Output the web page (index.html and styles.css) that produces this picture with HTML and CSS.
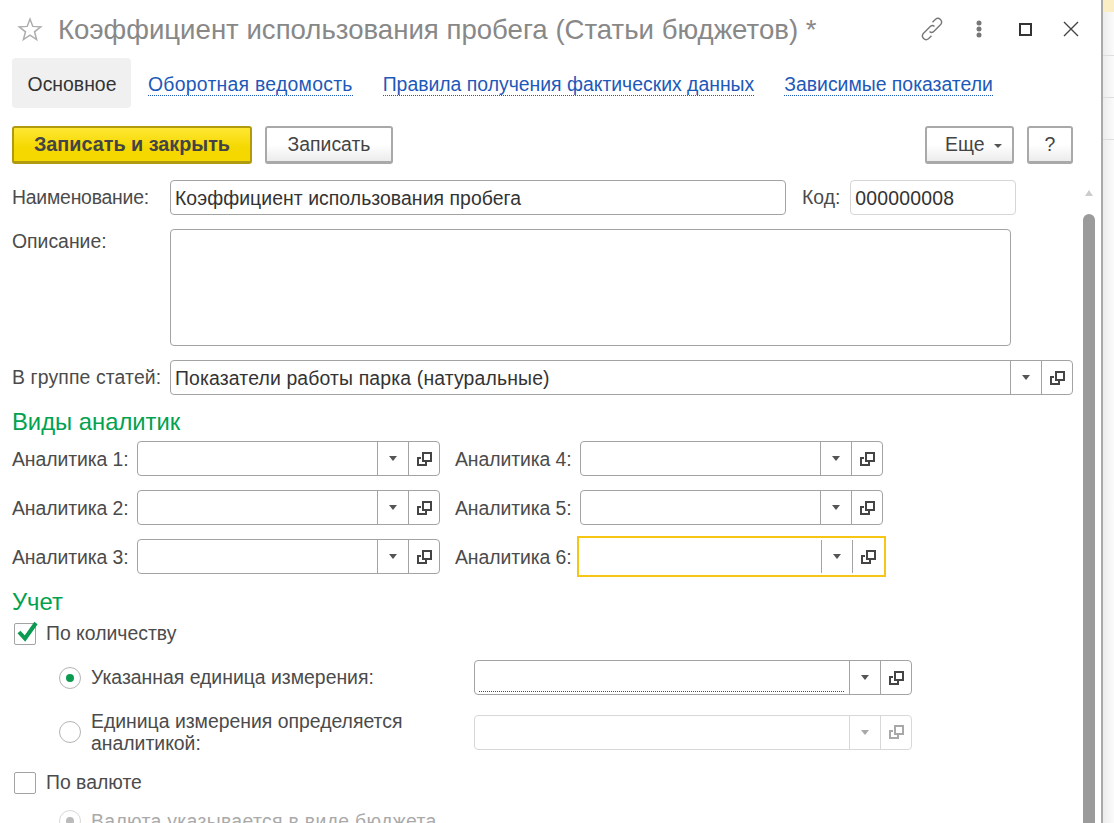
FILE: index.html
```html
<!DOCTYPE html>
<html lang="ru">
<head>
    <meta charset="UTF-8">
    <title>Коэффициент использования пробега</title>
    <link rel="stylesheet" href="styles.css">
</head>
<body>
    <svg class="defs" width="0" height="0">
        <symbol id="open" viewBox="0 0 15 14">
            <path d="M6 1h8v8h-8z M4 6H1v7h8v-3" fill="none" stroke="currentColor" stroke-width="2"/>
        </symbol>
    </svg>
    <div class="window">
        <div class="title-bar">
            <svg class="star" width="26" height="26" viewBox="0 0 26 26">
                <path d="M13 3l2.800 7.400 7.900.4-6.200 5 2.100 7.700-6.600-4.400-6.600 4.400 2.100-7.700-6.200-5 7.900-.4z" fill="none" stroke="#adadad" stroke-width="1.500"/>
            </svg>
            <div class="title">Коэффициент использования пробега (Статьи бюджетов) *</div>
            <div class="title-icons">
                <svg class="icon-link" width="24" height="24" viewBox="0 0 24 24">
                    <path d="M9.500 14.500a3 3 0 0 0 4.200 0l7-7a3.700 3.700 0 0 0-5.200-5.200l-3 3M14.500 9.500a3 3 0 0 0-4.200 0l-7 7a3.700 3.700 0 0 0 5.200 5.200l3-3" fill="none" stroke="#777" stroke-width="1.400"/>
                </svg>
                <svg class="icon-dots" width="6" height="18" viewBox="0 0 6 18">
                    <circle cx="3" cy="3" r="2.500" fill="#777"/><circle cx="3" cy="9" r="2.500" fill="#777"/><circle cx="3" cy="15" r="2.500" fill="#777"/>
                </svg>
                <div class="maximize"></div>
                <svg class="icon-close" width="16" height="16" viewBox="0 0 16 16">
                    <path d="M1 1l14 14M15 1L1 15" stroke="#444" stroke-width="1.400"/>
                </svg>
            </div>
        </div>

        <div class="tabs">
            <div class="tab-active">Основное</div>
            <a class="tab-link tab-link-first">Оборотная ведомость</a>
            <a class="tab-link">Правила получения фактических данных</a>
            <a class="tab-link">Зависимые показатели</a>
        </div>

        <div class="toolbar">
            <button class="btn btn-primary">Записать и закрыть</button>
            <button class="btn btn-save">Записать</button>
            <div class="spacer"></div>
            <button class="btn btn-more">Еще <span class="caret"></span></button>
            <button class="btn btn-help">?</button>
        </div>

        <div class="form">
            <div class="row row-name">
                <label class="label label-name label-tight">Наименование:</label>
                <div class="field field-name">Коэффициент использования пробега</div>
                <label class="label label-code">Код:</label>
                <div class="field field-code">000000008</div>
            </div>
            <div class="row row-desc">
                <label class="label label-name">Описание:</label>
                <div class="field field-desc"></div>
            </div>
            <div class="row row-group">
                <label class="label label-group">В группе статей:</label>
                <div class="combo combo-group">
                    <div class="combo-value">Показатели работы парка (натуральные)</div>
                    <div class="combo-btn"><span class="arrow"></span></div>
                    <div class="combo-btn"><svg width="15" height="14"><use href="#open"/></svg></div>
                </div>
            </div>

            <h2 class="section-title title-analytics">Виды аналитик</h2>
            <div class="analytics">
                <div class="row-a">
                    <label class="label label-a">Аналитика 1:</label>
                    <div class="combo combo-a">
                        <div class="combo-value"></div>
                        <div class="combo-btn"><span class="arrow"></span></div>
                        <div class="combo-btn"><svg width="15" height="14"><use href="#open"/></svg></div>
                    </div>
                </div>
                <div class="row-a">
                    <label class="label label-a">Аналитика 4:</label>
                    <div class="combo combo-a">
                        <div class="combo-value"></div>
                        <div class="combo-btn"><span class="arrow"></span></div>
                        <div class="combo-btn"><svg width="15" height="14"><use href="#open"/></svg></div>
                    </div>
                </div>
                <div class="row-a">
                    <label class="label label-a">Аналитика 2:</label>
                    <div class="combo combo-a">
                        <div class="combo-value"></div>
                        <div class="combo-btn"><span class="arrow"></span></div>
                        <div class="combo-btn"><svg width="15" height="14"><use href="#open"/></svg></div>
                    </div>
                </div>
                <div class="row-a">
                    <label class="label label-a">Аналитика 5:</label>
                    <div class="combo combo-a">
                        <div class="combo-value"></div>
                        <div class="combo-btn"><span class="arrow"></span></div>
                        <div class="combo-btn"><svg width="15" height="14"><use href="#open"/></svg></div>
                    </div>
                </div>
                <div class="row-a">
                    <label class="label label-a">Аналитика 3:</label>
                    <div class="combo combo-a">
                        <div class="combo-value"></div>
                        <div class="combo-btn"><span class="arrow"></span></div>
                        <div class="combo-btn"><svg width="15" height="14"><use href="#open"/></svg></div>
                    </div>
                </div>
                <div class="row-a">
                    <label class="label label-a">Аналитика 6:</label>
                    <div class="combo combo-a combo-focus">
                        <div class="combo-value"></div>
                        <div class="combo-btn"><span class="arrow"></span></div>
                        <div class="combo-btn"><svg width="15" height="14"><use href="#open"/></svg></div>
                    </div>
                </div>
            </div>

            <h2 class="section-title title-account">Учет</h2>
            <div class="check-row check-qty">
                <span class="checkbox">
                    <svg class="check-mark" width="24" height="24" viewBox="0 0 24 24">
                        <path d="M5 13l6 6.500L22 4" fill="none" stroke="#0a9a50" stroke-width="4"/>
                    </svg>
                </span>
                <span class="label">По количеству</span>
            </div>
            <div class="radio-row radio-unit">
                <span class="radio radio-on"></span>
                <span class="label radio-label radio-label-single">Указанная единица измерения:</span>
                <div class="combo combo-unit">
                    <div class="combo-value"><div class="required"></div></div>
                    <div class="combo-btn"><span class="arrow"></span></div>
                    <div class="combo-btn"><svg width="15" height="14"><use href="#open"/></svg></div>
                </div>
            </div>
            <div class="radio-row radio-by-analytics">
                <span class="radio"></span>
                <span class="label radio-label">Единица измерения определяется аналитикой:</span>
                <div class="combo combo-unit combo-disabled">
                    <div class="combo-value"></div>
                    <div class="combo-btn"><span class="arrow"></span></div>
                    <div class="combo-btn"><svg width="15" height="14"><use href="#open"/></svg></div>
                </div>
            </div>
            <div class="check-row check-currency">
                <span class="checkbox"></span>
                <span class="label">По валюте</span>
            </div>
            <div class="radio-row radio-currency">
                <span class="radio radio-off-dot"></span>
                <span class="label radio-label label-muted">Валюта указывается в виде бюджета</span>
            </div>
        </div>

        <div class="scrollbar">
            <span class="scroll-up"></span>
            <span class="scroll-thumb"></span>
        </div>
    </div>
    <div class="backdrop">
        <div class="backdrop-cell backdrop-first"></div>
        <div class="backdrop-cell backdrop-second"></div>
        <div class="backdrop-cell"></div>
        <div class="backdrop-cell"></div>
    </div>
</body>
</html>
```

FILE: styles.css
```css
html, body {
    margin: 0;
    height: 100%;
    overflow: hidden;
}

body {
    display: flex;
    background: #fff;
    font-family: "Liberation Sans", Arial, sans-serif;
    font-size: 19.4px;
    color: #4b4b4b;
}

.defs {
    position: absolute;
}

.window {
    position: relative;
    width: 1103px;
    height: 823px;
    flex: none;
    overflow: hidden;
    background: #fff;
    border-right: 2px solid #a9a9a9;
    padding: 0 12px;
    box-sizing: border-box;
}

.backdrop {
    flex: 1;
    background: linear-gradient(90deg, #ececec, #fbfbfb);
}

.backdrop-cell {
    height: 41px;
    border-bottom: 1px solid #dedede;
}

.backdrop-first {
    height: 12px;
    background: #fbeec4;
    border-bottom: none;
}

.backdrop-second {
    height: 43px;
}

/* title */
.title-bar {
    display: flex;
    align-items: center;
    height: 58px;
}

.star {
    margin-left: 5px;
    flex: none;
}

.title {
    margin-left: 15px;
    padding-top: 2px;
    font-size: 27.6px;
    color: #888;
    white-space: nowrap;
}

.title-icons {
    display: flex;
    align-items: center;
    margin-left: auto;
    margin-right: 10px;
}

.icon-dots {
    margin-left: 32px;
}

.maximize {
    width: 9px;
    height: 9px;
    border: 2px solid #333;
    margin-left: 37px;
}

.icon-close {
    margin-left: 31px;
}

/* tabs */
.tabs {
    display: flex;
    align-items: center;
    height: 50px;
}

.tab-active {
    box-sizing: border-box;
    width: 119px;
    height: 50px;
    padding-left: 1px;
    line-height: 52px;
    text-align: center;
    background: #f0f0f0;
    border-radius: 4px;
    color: #333;
    margin-right: 17px;
}

.tab-link {
    color: #1d59b8;
    border-bottom: 1px dotted #1d59b8;
    line-height: 21px;
    margin-top: 4px;
    margin-right: 30px;
}

.tab-link-first {
    letter-spacing: 0.26px;
}

/* buttons */
.toolbar {
    display: flex;
    margin-top: 18px;
    height: 39px;
}

.btn {
    height: 38px;
    box-sizing: border-box;
    font-family: inherit;
    font-size: 19.4px;
    color: #444;
    background: linear-gradient(#fff 50%, #ececec);
    border: 2px solid #a9a9a9;
    border-bottom-width: 3px;
    border-radius: 3px;
    padding: 0;
}

.btn-primary {
    width: 240px;
    font-size: 19.8px;
    font-weight: bold;
    background: linear-gradient(#ffe733, #f5d800 60%);
    border-color: #b09a10;
}

.btn-save {
    width: 128px;
    margin-left: 13px;
}

.spacer {
    flex: 1;
}

.btn-more {
    width: 89px;
    padding-left: 8px;
    margin-right: 13px;
}

.btn-help {
    width: 46px;
    margin-right: 16px;
}

.caret {
    display: inline-block;
    vertical-align: middle;
    margin-left: 4px;
    border: 4px solid transparent;
    border-top-color: #555;
    border-bottom: none;
}

/* form */
.form {
    margin-top: 15px;
}

.row {
    display: flex;
    align-items: center;
}

.label {
    white-space: nowrap;
}

.label-name {
    width: 158px;
    flex: none;
}

.label-tight {
    letter-spacing: -0.22px;
}

.label-group {
    width: 158px;
    flex: none;
    letter-spacing: 0.13px;
}

.label-code {
    margin: 0 10px 0 16px;
}

.field {
    box-sizing: border-box;
    background: #fff;
    border: 1px solid #a3a3a3;
    border-radius: 4px;
    padding: 0 4px;
    color: #333;
}

.row-name {
    height: 35px;
}

.field-name {
    width: 616px;
    height: 35px;
    line-height: 34px;
    letter-spacing: 0.06px;
}

.field-code {
    width: 166px;
    height: 35px;
    line-height: 34px;
    border-color: #d6d6d6;
    letter-spacing: 0.2px;
}

.row-desc {
    align-items: flex-start;
    margin-top: 14px;
}

.row-desc .label {
    padding-top: 1px;
}

.field-desc {
    width: 841px;
    height: 117px;
}

.row-group {
    margin-top: 14px;
}

.combo {
    display: flex;
    box-sizing: border-box;
    height: 35px;
    background: #fff;
    border: 1px solid #a3a3a3;
    border-radius: 4px;
}

.combo-group {
    width: 903px;
}

.combo-group .combo-value {
    padding-left: 4px;
    letter-spacing: 0.15px;
}

.combo-value {
    flex: 1;
    position: relative;
    padding: 0 3px;
    line-height: 34px;
    color: #333;
}

.combo-btn {
    display: flex;
    align-items: center;
    justify-content: center;
    width: 30px;
    flex: none;
    border-left: 1px solid #a3a3a3;
    color: #444;
}

.arrow {
    border: 4px solid transparent;
    border-top: 5px solid #555;
    border-bottom: none;
}

.section-title {
    margin: 0;
    font-size: 23.8px;
    font-weight: normal;
    color: #00a24f;
    line-height: 26px;
}

.title-analytics {
    margin-top: 14px;
}

.analytics {
    display: grid;
    grid-template-columns: 443px 1fr;
    row-gap: 14px;
    margin-top: 6px;
}

.row-a {
    display: flex;
    align-items: center;
}

.label-a {
    width: 125px;
    flex: none;
    padding-top: 2px;
    letter-spacing: -0.08px;
}

.combo-a {
    width: 303px;
}

.combo-focus {
    width: 309px;
    height: 41px;
    margin: -3px 0 -3px -3px;
    border: 2px solid #f7c615;
    border-radius: 0;
    padding: 2px 1px;
}

.title-account {
    margin-top: 15px;
}

.check-row {
    display: flex;
    align-items: center;
    gap: 10px;
    margin-left: 2px;
}

.checkbox {
    position: relative;
    display: block;
    box-sizing: border-box;
    width: 22px;
    height: 22px;
    border: 1px solid #a3a3a3;
    border-radius: 2px;
    flex: none;
}

.check-mark {
    position: absolute;
    left: -1px;
    top: -5px;
}

.check-qty {
    margin-top: 7px;
}

.radio-row {
    display: flex;
    align-items: center;
    margin-left: 47px;
}

.radio {
    display: block;
    box-sizing: border-box;
    width: 22px;
    height: 22px;
    border: 1px solid #b4b4b4;
    border-radius: 50%;
    flex: none;
    position: relative;
}

.radio-on::after, .radio-off-dot::after {
    content: "";
    position: absolute;
    left: 6px;
    top: 6px;
    width: 8px;
    height: 8px;
    border-radius: 50%;
    background: #0a9a50;
}

.radio-off-dot {
    border-color: #d8d8d8;
}

.radio-off-dot::after {
    background: #bbb;
}

.radio-label {
    width: 383px;
    margin-left: 10px;
    flex: none;
    white-space: normal;
    line-height: 22px;
}

.radio-label-single {
    padding-bottom: 2px;
}

.label-muted {
    color: #aaa;
    white-space: nowrap;
    letter-spacing: 0.33px;
}

.combo-unit {
    width: 438px;
}

.radio-unit {
    margin-top: 15px;
}

.radio-by-analytics {
    margin-top: 15px;
}

.check-currency {
    margin-top: 17px;
}

.radio-currency {
    margin-top: 16px;
}

.required {
    position: absolute;
    left: 4px;
    right: 5px;
    bottom: 2px;
    border-bottom: 1px dotted #f00;
}

.combo-disabled {
    border-color: #d8d8d8;
}

.combo-disabled .combo-btn {
    border-color: #d8d8d8;
    color: #a8a8a8;
}

.combo-disabled .arrow {
    border-top-color: #a8a8a8;
}

/* scrollbar */
.scrollbar {
    position: absolute;
    right: 6px;
    top: 190px;
    bottom: 0;
    width: 12px;
}

.scroll-up {
    display: block;
    margin: 0 auto;
    width: 0;
    border: 4px solid transparent;
    border-bottom: 6px solid #ccc;
    border-top: none;
}

.scroll-thumb {
    display: block;
    margin-top: 18px;
    height: 700px;
    background: #9b9b9b;
    border-radius: 6px 6px 0 0;
}
```
